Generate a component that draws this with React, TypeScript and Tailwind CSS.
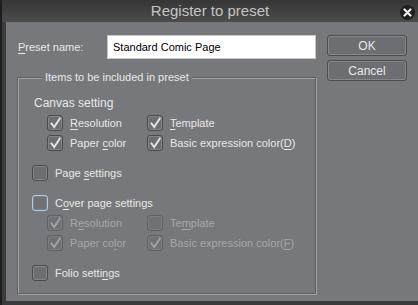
import React from "react";

const Check = ({ disabled }: { disabled?: boolean }) => (
  <svg width="13" height="13" viewBox="0 0 13 13" className="block">
    <path
      d="M2.5 6.5 L5.2 10 L10.8 1.5"
      fill="none"
      stroke={disabled ? "#a2a3a7" : "#e6e6e6"}
      strokeWidth="1.9"
      strokeLinecap="square"
      strokeLinejoin="miter"
    />
  </svg>
);

const Box = ({
  checked,
  disabled,
  focus,
}: {
  checked?: boolean;
  disabled?: boolean;
  focus?: boolean;
}) => (
  <div
    className={
      "w-[16px] h-[16px] rounded-[3px] border flex items-center justify-center shrink-0 " +
      (focus
        ? "border-[#a9cfe6] bg-[#707175] shadow-[inset_0_0_0_1px_#7f8084]"
        : disabled
        ? "border-[#606165] bg-[#707175] shadow-[inset_0_0_0_1px_#7c7d81]"
        : "border-[#4b4c50] bg-[#6d6e72] shadow-[inset_0_0_0_1px_#838488]")
    }
  >
    {checked && <Check disabled={disabled} />}
  </div>
);

const Item = ({
  checked,
  disabled,
  focus,
  children,
  w,
}: {
  checked?: boolean;
  disabled?: boolean;
  focus?: boolean;
  children: React.ReactNode;
  w?: string;
}) => (
  <div className={"flex items-center gap-[7px] h-[20px] " + (w ?? "")}>
    <Box checked={checked} disabled={disabled} focus={focus} />
    <span className={disabled ? "text-[#a6a7ab]" : "text-[#e8e8e8]"}>{children}</span>
  </div>
);

const U = ({ children }: { children: React.ReactNode }) => (
  <span className="underline underline-offset-[2px]">{children}</span>
);

export default function App() {
  return (
    <div
      className="w-[418px] h-[305px] flex flex-col bg-[#1e1e1e] text-[11px] overflow-hidden"
      style={{ fontFamily: '"Liberation Sans", Arial, sans-serif' }}
    >
      {/* title bar */}
      <div className="h-[22px] shrink-0 flex items-center relative border-l-2 border-[#1d1d1d] bg-gradient-to-b from-[#363636] to-[#4b4b4b]">
        <div className="flex-1 text-center text-[15px] text-[#c4c4c4] leading-[22px]">Register to preset</div>
        <div className="absolute right-[3px] top-[5px] w-[15px] h-[15px] rounded-full bg-[#1f1f1f] flex items-center justify-center">
          <svg width="9" height="9" viewBox="0 0 9 9">
            <path d="M1.5 1.5 L7.5 7.5 M7.5 1.5 L1.5 7.5" stroke="#f0f0f0" strokeWidth="2.2" strokeLinecap="round" />
          </svg>
        </div>
      </div>
      {/* body */}
      <div className="flex-1 flex border-l-2 border-[#1d1d1d]">
        <div className="w-[4px] bg-[#3b3b3b]" />
        <div className="flex-1 bg-[#77787c] flex pt-[13px] pl-[11px]">
          {/* left column */}
          <div className="w-[299px] flex flex-col">
            <div className="h-[24px] flex items-center">
              <span className="pl-[1px] text-[#e8e8e8]">
                <U>P</U>reset name:
              </span>
              <div className="ml-auto w-[209px] h-[24px] bg-white border border-[#c8c8c8] flex items-center pl-[5px] text-black">
                Standard Comic Page
              </div>
            </div>
            <fieldset className="mt-[11px] h-[224px] border border-[#5e5f63] shadow-[inset_1px_1px_0_#a3a4a7,1px_1px_0_#a3a4a7] pl-[14px] pt-[9px] m-0">
              <legend className="ml-[10px] px-[3px] leading-[14px] text-[#e8e8e8] bg-[#77787c]">
                Items to be included in preset
              </legend>
              <div className="h-[20px] flex items-center pl-[2px] text-[12px] text-[#e8e8e8]">Canvas setting</div>
              <div className="pl-[15px]">
                <div className="flex">
                  <Item checked w="w-[100px]">
                    <U>R</U>esolution
                  </Item>
                  <Item checked>
                    <U>T</U>emplate
                  </Item>
                </div>
                <div className="flex">
                  <Item checked w="w-[100px]">
                    Paper <U>c</U>olor
                  </Item>
                  <Item checked>
                    Basic expression color(<U>D</U>)
                  </Item>
                </div>
              </div>
              <div className="mt-[10px]">
                <Item>
                  Page <U>s</U>ettings
                </Item>
              </div>
              <div className="mt-[10px]">
                <Item focus>
                  C<U>o</U>ver page settings
                </Item>
              </div>
              <div className="pl-[15px]">
                <div className="flex">
                  <Item checked disabled w="w-[100px]">
                    R<U>e</U>solution
                  </Item>
                  <Item disabled>
                    Te<U>m</U>plate
                  </Item>
                </div>
                <div className="flex">
                  <Item checked disabled w="w-[100px]">
                    Paper co<U>l</U>or
                  </Item>
                  <Item checked disabled>
                    Basic expression color(<U>F</U>)
                  </Item>
                </div>
              </div>
              <div className="mt-[10px]">
                <Item>
                  Folio setti<U>n</U>gs
                </Item>
              </div>
            </fieldset>
          </div>
          {/* buttons */}
          <div className="ml-[11px] w-[80px] flex flex-col gap-[4px]">
            <div className="h-[21px] rounded-[3px] border border-[#4c4d51] bg-[#6d6e72] shadow-[inset_0_0_0_1px_#86878b] flex items-center justify-center text-[12px] text-[#e8e8e8]">
              OK
            </div>
            <div className="h-[21px] rounded-[3px] border border-[#4c4d51] bg-[#6d6e72] shadow-[inset_0_0_0_1px_#86878b] flex items-center justify-center text-[12px] text-[#e8e8e8]">
              Cancel
            </div>
          </div>
        </div>
      </div>
      <div className="h-[4px] shrink-0 bg-[#3a3a3a] border-l-2 border-[#1d1d1d]" />
    </div>
  );
}
